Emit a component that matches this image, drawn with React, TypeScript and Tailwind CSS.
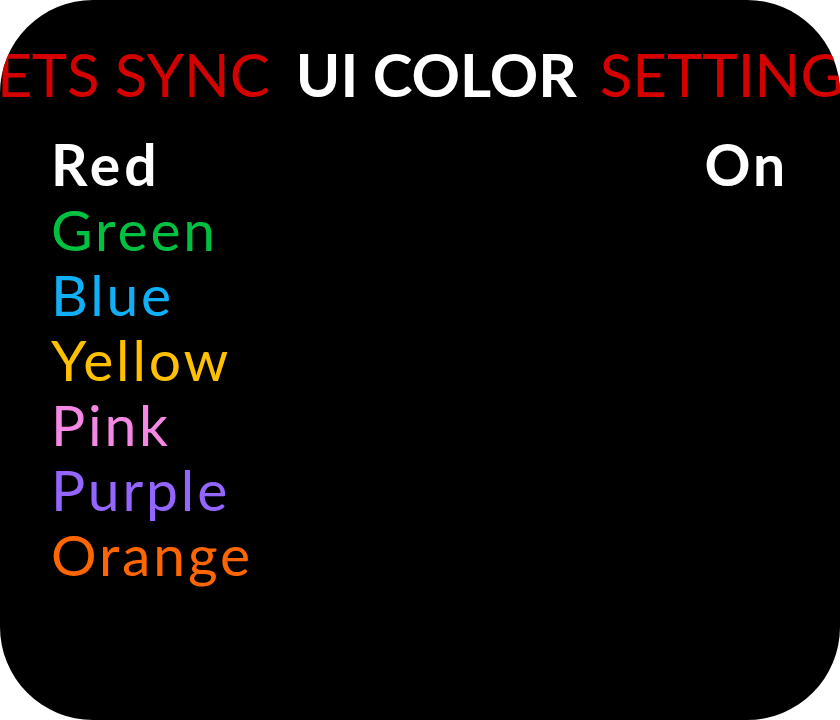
import React from "react";

const colors = [
  { name: "Green", cls: "text-[#00c040]" },
  { name: "Blue", cls: "text-[#10b0f8]" },
  { name: "Yellow", cls: "text-[#ffc000]" },
  { name: "Pink", cls: "text-[#f588e4]" },
  { name: "Purple", cls: "text-[#9466ff]" },
  { name: "Orange", cls: "text-[#ff6600]" },
];

export default function App() {
  return (
    <div
      className="w-[840px] h-[720px] bg-white"
      style={{ fontFamily: "Lato, 'Noto Sans', sans-serif" }}
    >
      <div className="w-full h-full bg-black rounded-[93px] overflow-hidden flex flex-col">
        <div className="pt-[44px] pr-[107px] flex justify-center whitespace-nowrap text-[60px] leading-none">
          <span className="text-[#d40000]">PRESETS SYNC</span>
          <span className="ml-[26px] text-white font-bold">UI COLOR</span>
          <span className="ml-[23px] text-[#d40000]">SETTINGS</span>
        </div>
        <div className="mt-[28px] pl-[51px] pr-[52px] text-[57px] leading-[65px] tracking-[0.05em]">
          <div className="flex justify-between text-white font-bold tracking-[0.07em]">
            <span>Red</span>
            <span className="tracking-[0.05em]">On</span>
          </div>
          {colors.map((c) => (
            <div key={c.name} className={c.cls}>
              {c.name}
            </div>
          ))}
        </div>
      </div>
    </div>
  );
}
